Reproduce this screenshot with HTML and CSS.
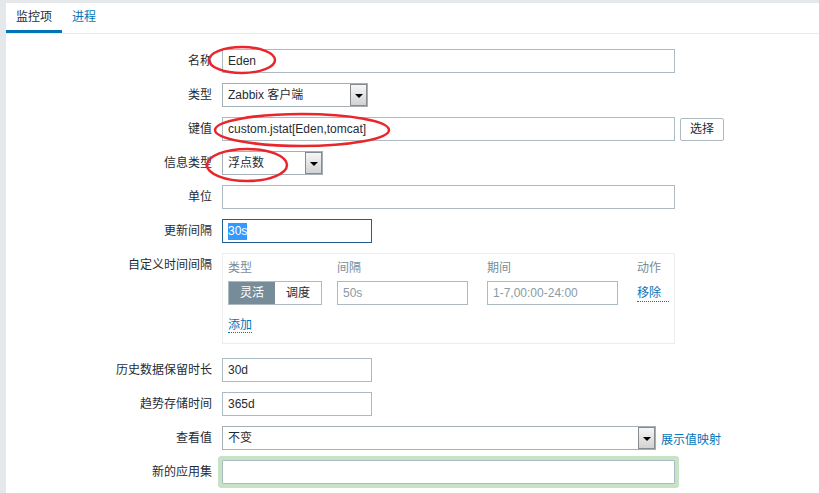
FILE: index.html
```html
<!DOCTYPE html>
<html lang="zh">
<head>
<meta charset="utf-8">
<title>监控项</title>
<link rel="stylesheet" href="styles.css">
</head>
<body>
<div class="page">
  <div class="tabs">
    <span class="tab active">监控项</span>
    <span class="tab">进程</span>
  </div>
  <div class="form">
    <div class="lbl">名称</div>
    <div class="ctl"><div class="field w-wide">Eden</div></div>

    <div class="lbl">类型</div>
    <div class="ctl"><div class="select w-type">Zabbix 客户端<span class="arrow"></span></div></div>

    <div class="lbl">键值</div>
    <div class="ctl"><div class="field w-wide">custom.jstat[Eden,tomcat]</div><span class="btn">选择</span></div>

    <div class="lbl">信息类型</div>
    <div class="ctl"><div class="select w-info">浮点数<span class="arrow"></span></div></div>

    <div class="lbl">单位</div>
    <div class="ctl"><div class="field w-wide"></div></div>

    <div class="lbl">更新间隔</div>
    <div class="ctl"><div class="field w-mid focus"><span class="sel">30s</span></div></div>

    <div class="lbl">自定义时间间隔</div>
    <div class="ctl">
      <div class="intervals">
        <div class="ihead">
          <span>类型</span><span>间隔</span><span>期间</span><span>动作</span>
        </div>
        <div class="irow">
          <div class="toggle"><span class="on">灵活</span><span>调度</span></div>
          <div class="field w-int ph">50s</div>
          <div class="field w-int ph">1-7,00:00-24:00</div>
          <span class="link">移除</span>
        </div>
        <div class="iadd"><span class="link">添加</span></div>
      </div>
    </div>

    <div class="lbl">历史数据保留时长</div>
    <div class="ctl"><div class="field w-mid">30d</div></div>

    <div class="lbl">趋势存储时间</div>
    <div class="ctl"><div class="field w-mid">365d</div></div>

    <div class="lbl">查看值</div>
    <div class="ctl"><div class="select w-val">不变<span class="arrow"></span></div><span class="plain-link">展示值映射</span></div>

    <div class="lbl">新的应用集</div>
    <div class="ctl"><div class="field w-wide glow"></div></div>
  </div>
</div>
<svg class="marks" width="819" height="493" viewBox="0 0 819 493">
  <ellipse cx="242" cy="60" rx="33" ry="13" />
  <ellipse cx="302" cy="130" rx="87" ry="16" />
  <ellipse cx="247" cy="165" rx="40" ry="16" />
</svg>
</body>
</html>
```
FILE: styles.css
```css
html, body {
  margin: 0;
  padding: 0;
}
body {
  background: #e5e8eb;
  font-family: "Liberation Sans", "Noto Sans CJK SC", sans-serif;
  font-size: 12px;
  color: #1f2c33;
  width: 819px;
  height: 493px;
  overflow: hidden;
  position: relative;
}
.page {
  margin: 3px 0 0 6px;
  background: #fff;
  height: 490px;
}
.tabs {
  display: flex;
  height: 30px;
  border-bottom: 1px solid #ebebeb;
}
.tab {
  padding: 0 10px;
  line-height: 28px;
  color: #0275b8;
  border-bottom: 3px solid transparent;
}
.tab.active {
  color: #1f2c33;
  border-bottom-color: #0275b8;
}
.form {
  display: grid;
  grid-template-columns: 206px 1fr;
  column-gap: 10px;
  row-gap: 10px;
  padding-top: 15px;
}
.lbl {
  text-align: right;
  line-height: 24px;
  white-space: nowrap;
}
.ctl {
  display: flex;
  align-items: center;
  gap: 5px;
}
.field {
  box-sizing: border-box;
  height: 24px;
  border: 1px solid #acbbc2;
  padding: 0 5px;
  line-height: 22px;
  background: #fff;
  white-space: nowrap;
  overflow: hidden;
}
.w-wide { width: 453px; }
.w-mid { width: 150px; }
.w-int { width: 131px; }
.field.focus {
  border-color: #1f5f94;
}
.sel {
  background: #3399ff;
  color: #fff;
  padding: 1px 0 2px;
}
.field.ph {
  color: #8a9aa3;
}
.field.glow {
  box-shadow: 0 0 0 4px #c6e3c6;
  border-radius: 1px;
}
.select {
  box-sizing: border-box;
  position: relative;
  height: 24px;
  border: 1px solid #a5b0b6;
  padding: 0 5px;
  line-height: 22px;
  background: #fff;
}
.w-type { width: 146px; }
.w-info { width: 101px; }
.w-val { width: 434px; }
.arrow {
  position: absolute;
  top: 0;
  right: 0;
  width: 17px;
  height: 22px;
  box-sizing: border-box;
  border: 1px solid #858b8f;
  background: linear-gradient(#f6f6f6, #d2d2d2);
}
.arrow::after {
  content: "";
  position: absolute;
  left: 4px;
  top: 9px;
  border-left: 4px solid transparent;
  border-right: 4px solid transparent;
  border-top: 4px solid #000;
}
.btn {
  box-sizing: border-box;
  height: 23px;
  padding: 0 9px;
  border: 1px solid #acbbc2;
  border-radius: 2px;
  line-height: 21px;
  background: #fff;
}
.plain-link {
  color: #0275b8;
}
.intervals {
  box-sizing: border-box;
  width: 453px;
  height: 91px;
  margin-bottom: 4px;
  border: 1px solid #ebeef0;
  padding: 5px 5px 0;
}
.ihead, .irow {
  display: grid;
  grid-template-columns: 109px 150px 150px auto;
}
.ihead {
  line-height: 18px;
  color: #768d99;
  margin-bottom: 4px;
}
.irow {
  align-items: center;
  height: 24px;
}
.toggle {
  display: flex;
  width: 94px;
  height: 24px;
  box-sizing: border-box;
  border: 1px solid #acbbc2;
}
.toggle span {
  flex: 1;
  text-align: center;
  line-height: 22px;
}
.toggle .on {
  background: #768d99;
  color: #fff;
}
.link {
  color: #0275b8;
  border-bottom: 1px dotted #0275b8;
  line-height: 16px;
}
.iadd {
  margin-top: 11px;
  line-height: 18px;
}
.marks {
  position: absolute;
  top: 0;
  left: 0;
  pointer-events: none;
}
.marks ellipse {
  fill: none;
  stroke: #e8262b;
  stroke-width: 2.5;
}
```
